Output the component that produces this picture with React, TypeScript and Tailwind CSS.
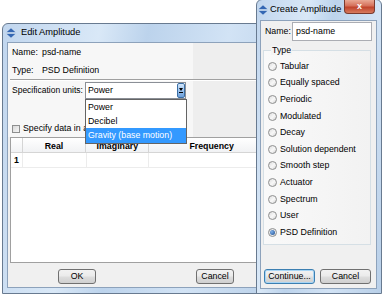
import React from "react";

function AppIcon() {
  return (
    <svg width="10" height="10" viewBox="0 0 10 10">
      <path d="M5 0.3 L9.2 4 H0.8 Z" fill="#3467b3" />
      <rect x="0.5" y="4.4" width="9" height="1.2" fill="#a9c0de" />
      <path d="M5 9.7 L9.2 6 H0.8 Z" fill="#3467b3" />
    </svg>
  );
}

function Btn({ label, w, focus }: { label: string; w: string; focus?: boolean }) {
  return (
    <div
      className={`${w} flex h-[15px] items-center justify-center rounded-[3px] border ${
        focus ? "border-[#3c7fb1] shadow-[inset_0_0_0_1px_#a7d5f5]" : "border-[#707070]"
      } bg-[linear-gradient(#f2f2f2,#ebebeb_45%,#dddddd_55%,#cfcfcf)] text-[8.8px] text-black`}
    >
      {label}
    </div>
  );
}

function Radio({ label, checked }: { label: string; checked?: boolean }) {
  return (
    <div className="flex h-[16.6px] items-center">
      <div className="ml-[4px] flex h-[9px] w-[9px] items-center justify-center rounded-full border border-[#8e8f8f] bg-[linear-gradient(135deg,#dcdcdc,#f8f8f8_55%,#d4d4d4)]">
        {checked && (
          <div className="h-[5px] w-[5px] rounded-full bg-[radial-gradient(circle_at_35%_35%,#7fb0ea,#1b4c8e)]" />
        )}
      </div>
      <span className="ml-[3px] whitespace-nowrap">{label}</span>
    </div>
  );
}

const frame =
  "border border-[#687a90] bg-[linear-gradient(100deg,#c1d6ee_0%,#d9e8f7_30%,#bcd3ec_45%,#d2e3f5_70%,#b8cfe8_100%)]";

export default function App() {
  const radios = [
    "Tabular",
    "Equally spaced",
    "Periodic",
    "Modulated",
    "Decay",
    "Solution dependent",
    "Smooth step",
    "Actuator",
    "Spectrum",
    "User",
  ];
  return (
    <div className="relative h-[296px] w-[382px] overflow-hidden bg-white font-['Liberation_Sans',Arial,sans-serif] text-[8.8px] leading-none text-black">
      {/* Edit Amplitude window */}
      <div className={`absolute left-[2px] top-[23px] flex h-[271px] w-[280px] flex-col rounded-t-[6px] ${frame}`}>
        <div className="flex h-[18px] items-center gap-[5px] pl-[3px]">
          <AppIcon />
          <span className="text-[9.3px]">Edit Amplitude</span>
        </div>
        <div className="relative mb-[5px] ml-[4px] mr-[4px] flex flex-1 flex-col border border-[#8da2bb] bg-[#f0f0f0]">
          <div className="flex flex-col bg-[linear-gradient(to_right,#f7f7f7_0,#f7f7f7_185px,#eeeeee_185px)]">
            <div className="flex h-[18px] items-center pl-[4px]">
              <span className="w-[30px]">Name:</span>
              <span>psd-name</span>
            </div>
            <div className="flex h-[18px] items-center pl-[4px]">
              <span className="w-[30px]">Type:</span>
              <span>PSD Definition</span>
            </div>
            <div className="mx-[2px] h-px bg-[#a0a0a0]" />
            <div className="mx-[2px] h-px bg-white" />
            <div className="mt-[1px] flex h-[17px] items-center pl-[4px]">
              <span className="w-[73px] whitespace-nowrap text-[8.5px]">Specification units:</span>
              <div className="flex h-[17px] w-[101px] items-center justify-between border border-[#8b8f96] bg-white pl-[2px]">
                <span>Power</span>
                <div className="flex h-[15px] w-[8px] flex-col items-center justify-center gap-[1px] rounded-[2px] border border-[#3a6ea5] bg-[linear-gradient(#d3e6fa,#9cc3ee_50%,#6c9fd9)]">
                  <div className="h-0 w-0 border-x-[2.5px] border-t-[3px] border-x-transparent border-t-black" />
                  <div className="h-px w-[4px] bg-black" />
                </div>
              </div>
            </div>
            <div className="mt-[21px] flex h-[17px] items-center pl-[4px]">
              <div className="h-[8px] w-[8px] border border-[#8e8f8f] bg-[linear-gradient(135deg,#d8d8d8,#f6f6f6)]" />
              <span className="ml-[3px] whitespace-nowrap">Specify data in a complex frequency table</span>
            </div>
          </div>
          {/* table */}
          <div className="mx-[2px] flex flex-1 flex-col border-b border-l border-t border-[#a0a0a0] bg-white">
            <div className="flex h-[15px] border-b border-[#d5d5d5] bg-[linear-gradient(#ffffff,#f1f2f4)] font-bold">
              <div className="w-[12px] border-r border-[#d5d5d5]" />
              <div className="flex w-[66px] items-end justify-center border-r border-[#d5d5d5] pb-[1px]">Real</div>
              <div className="flex w-[65px] items-end justify-center border-r border-[#d5d5d5] pb-[1px]">Imaginary</div>
              <div className="flex w-[129px] items-end justify-center pb-[1px]">Frequency</div>
            </div>
            <div className="flex h-[15px] border-b border-[#ececec]">
              <div className="flex w-[12px] items-center border-r border-[#ececec] pl-[3px] font-bold">1</div>
              <div className="w-[66px] border-r border-[#ececec]" />
              <div className="w-[65px] border-r border-[#ececec]" />
              <div className="w-[129px]" />
            </div>
          </div>
          <div className="mb-[3px] mt-[5px] flex h-[16px] items-center pl-[50px]">
            <Btn label="OK" w="w-[38px]" />
            <div className="ml-[100px]">
              <Btn label="Cancel" w="w-[38px]" />
            </div>
          </div>
          {/* dropdown list */}
          <div className="absolute left-[77px] top-[56px] flex h-[45px] w-[102px] flex-col border border-[#646464] bg-white">
            <div className="flex h-[14px] items-center pl-[2px]">Power</div>
            <div className="flex h-[14px] items-center pl-[2px]">Decibel</div>
            <div className="flex h-[15px] items-center bg-[#3399ff] pl-[2px] text-white">Gravity (base motion)</div>
          </div>
        </div>
      </div>

      {/* Create Amplitude window */}
      <div className={`absolute left-[256px] top-[-1px] flex h-[295px] w-[126px] flex-col rounded-t-[6px] ${frame}`}>
        <div className="relative flex h-[20px] items-center gap-[2px] pl-[1px]">
          <AppIcon />
          <span className="text-[9.3px]">Create Amplitude</span>
          <div className="absolute left-[87px] top-0 flex h-[14px] w-[31px] items-center justify-center rounded-b-[4px] border border-t-0 border-[#7a3a2e] bg-[linear-gradient(#e9a894,#d5705a_45%,#c0432b_55%,#d77b5f)] text-[9px] font-bold text-white">
            x
          </div>
        </div>
        <div className="mb-[4px] ml-[3px] mr-[4px] flex flex-1 flex-col border border-[#8da2bb] bg-[#f0f0f0]">
          <div className="mt-[1px] flex h-[19px] items-center pl-[4px]">
            <span className="w-[27px]">Name:</span>
            <div className="flex h-[19px] w-[80px] items-center border border-[#abadb3] bg-white pl-[3px]">psd-name</div>
          </div>
          <div className="relative ml-[2px] mt-[9px] h-[195px] w-[108px] border border-[#d5dfe5] bg-[linear-gradient(to_right,#f9f9f9,#f2f2f2)] pb-[4px] pt-[7px]">
            <span className="absolute left-[7px] top-[-5px] bg-[#f4f4f4] px-[1px] leading-[9px]">Type</span>
            {radios.map((r) => (
              <Radio key={r} label={r} />
            ))}
            <Radio label="PSD Definition" checked />
          </div>
          <div className="mb-[4px] mt-auto flex items-center gap-[5px] pl-[3px]">
            <Btn label="Continue..." w="w-[51px]" focus />
            <Btn label="Cancel" w="w-[51px]" />
          </div>
        </div>
      </div>
    </div>
  );
}
